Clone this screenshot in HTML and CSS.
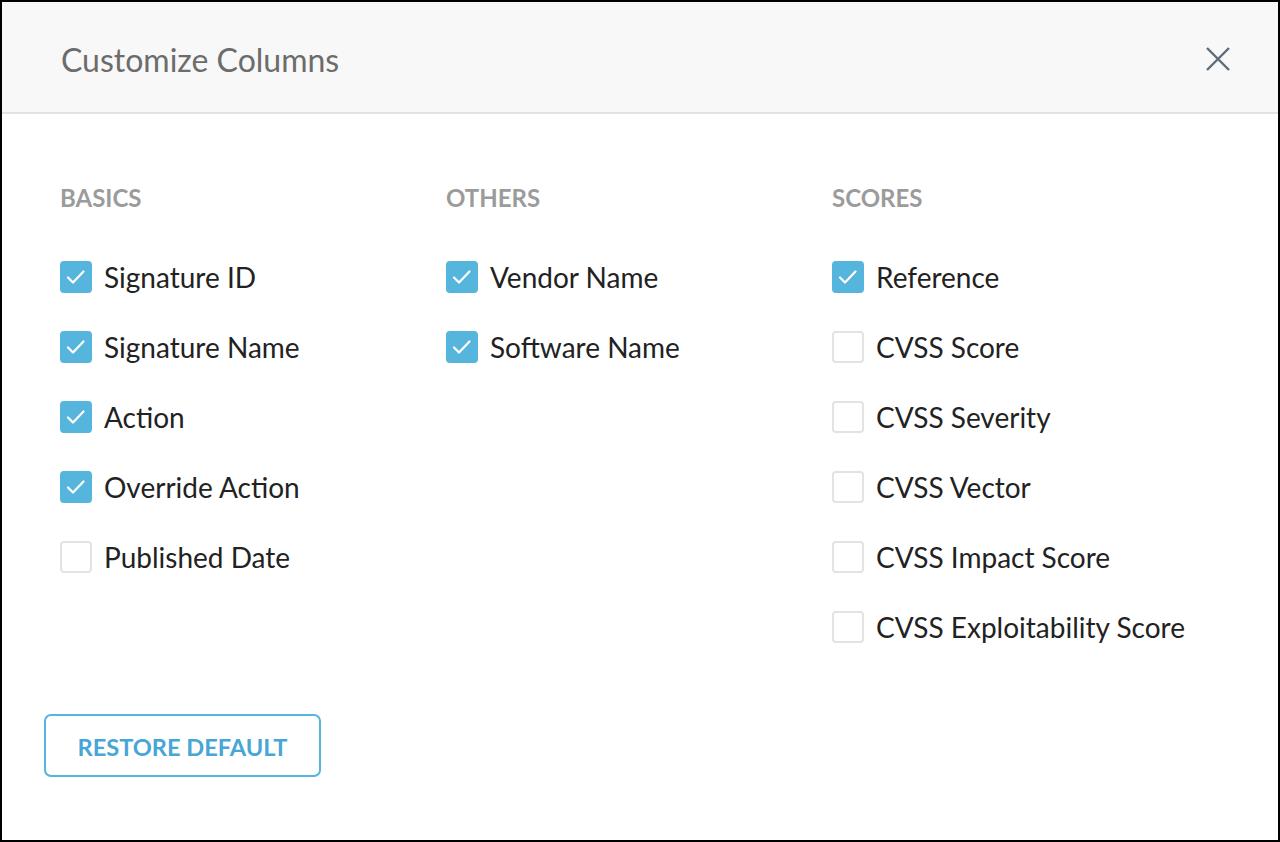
FILE: index.html
```html
<!DOCTYPE html>
<html>
<head>
<meta charset="utf-8">
<link rel="stylesheet" href="styles.css">
</head>
<body>
<div class="modal">
  <div class="header">
    <h1 class="title">Customize Columns</h1>
    <button class="close" aria-label="Close">
      <svg width="26" height="26" viewBox="0 0 26 26"><path d="M2 2L24 24M24 2L2 24" stroke="#5d6b7b" stroke-width="2.4" fill="none"/></svg>
    </button>
  </div>
  <div class="content">
    <div class="columns">
      <div class="col">
        <div class="col-title">BASICS</div>
        <label class="row"><span class="box on"></span>Signature ID</label>
        <label class="row"><span class="box on"></span>Signature Name</label>
        <label class="row"><span class="box on"></span>Action</label>
        <label class="row"><span class="box on"></span>Override Action</label>
        <label class="row"><span class="box"></span>Published Date</label>
      </div>
      <div class="col">
        <div class="col-title">OTHERS</div>
        <label class="row"><span class="box on"></span>Vendor Name</label>
        <label class="row"><span class="box on"></span>Software Name</label>
      </div>
      <div class="col">
        <div class="col-title">SCORES</div>
        <label class="row"><span class="box on"></span>Reference</label>
        <label class="row"><span class="box"></span>CVSS Score</label>
        <label class="row"><span class="box"></span>CVSS Severity</label>
        <label class="row"><span class="box"></span>CVSS Vector</label>
        <label class="row"><span class="box"></span>CVSS Impact Score</label>
        <label class="row"><span class="box"></span>CVSS Exploitability Score</label>
      </div>
    </div>
    <button class="restore">RESTORE DEFAULT</button>
  </div>
</div>
</body>
</html>
```
FILE: styles.css
```css
* { box-sizing: border-box; }
html, body { margin: 0; padding: 0; }
body { font-family: Lato, "Open Sans", sans-serif; background: #fff; }
.modal {
  width: 1280px;
  height: 842px;
  border: 2px solid #000;
  background: #fff;
  display: flex;
  flex-direction: column;
}
.header {
  height: 112px;
  background: #f8f8f8;
  border-bottom: 2px solid #e2e2e2;
  display: flex;
  align-items: center;
  justify-content: space-between;
  padding: 0 47px 0 59px;
}
.title {
  margin: 0;
  font-weight: 400;
  font-size: 32px;
  line-height: 40px;
  color: #6c6c6c;
  padding-top: 6px;
}
.close {
  background: none;
  border: 0;
  padding: 0;
  width: 26px;
  height: 26px;
  display: block;
  margin-top: 4px;
}
.close svg { display: block; }
.content {
  padding: 70px 0 0 42px;
}
.columns {
  display: flex;
  padding-left: 16px;
}
.col {
  width: 386px;
  display: flex;
  flex-direction: column;
  gap: 38px;
}
.col-title {
  font-size: 24px;
  line-height: 28px;
  font-weight: 700;
  color: #9b9b9b;
  margin-bottom: 11px;
}
.row {
  display: flex;
  align-items: center;
  height: 32px;
  font-size: 28px;
  color: #222;
}
.box {
  width: 32px;
  height: 32px;
  border: 2px solid #e3e3e3;
  border-radius: 4px;
  margin-right: 12px;
  flex: none;
  background: #fff;
}
.box.on {
  border-color: #55b5dc;
  background: #55b5dc url("data:image/svg+xml;utf8,<svg xmlns='http://www.w3.org/2000/svg' width='28' height='28' viewBox='0 0 28 28'><path d='M6 14.5L11 19.5L21.5 8.5' stroke='white' stroke-width='2.2' fill='none' stroke-linecap='round' stroke-linejoin='round'/></svg>") center/28px 28px no-repeat;
}
.restore {
  margin-top: 71px;
  width: 277px;
  height: 63px;
  border: 2px solid #55b5dc;
  border-radius: 7px;
  background: #fff;
  color: #47a6d5;
  font-family: Lato, sans-serif;
  font-weight: 700;
  font-size: 23.6px;
  padding: 2px 0 0 0;
}
```
